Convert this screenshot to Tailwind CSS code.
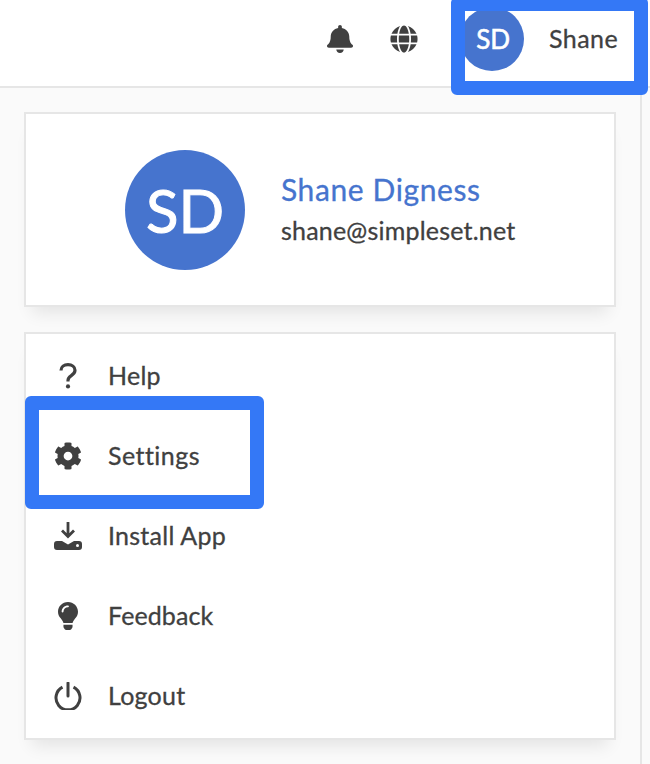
<!DOCTYPE html>
<html lang="en">
<head>
  <meta charset="UTF-8" />
  <meta name="viewport" content="width=device-width, initial-scale=1.0" />
  <title>Account menu</title>
  <script src="https://cdn.jsdelivr.net/npm/@tailwindcss/browser@4"></script>
</head>
<body class="relative h-[764px] overflow-hidden bg-[#fafafa] font-['Lato',sans-serif] text-[#404040] [-webkit-text-stroke:0.3px]">
  <!-- Header -->
  <header class="flex h-[88px] items-start justify-end border-b-2 border-[#e6e6e6] bg-white">
    <svg class="mt-[25px] h-[28px] w-[26px] fill-[#404040]" viewBox="0 0 448 512" preserveAspectRatio="none"><path d="M224 512c35.32 0 63.97-28.65 63.97-64H160.03c0 35.35 28.65 64 63.97 64zm215.39-149.71c-19.32-20.76-55.47-51.99-55.47-154.29 0-77.7-54.48-139.9-127.94-155.16V32c0-17.67-14.32-32-31.98-32s-31.98 14.33-31.98 32v20.84C118.56 68.1 64.08 130.3 64.08 208c0 102.3-36.15 133.53-55.47 154.29-6 6.45-8.66 14.16-8.61 21.71.11 16.4 12.98 32 32.1 32h383.8c19.12 0 32-15.6 32.1-32 .05-7.55-2.61-15.27-8.61-21.71z"/></svg>
    <svg class="mt-[25px] ml-[37px] h-[28px] w-[28px] fill-[#404040]" viewBox="0 0 496 512"><path d="M336.5 160C322 70.7 287.8 8 248 8s-74 62.7-88.5 152h177zM152 256c0 22.2 1.2 43.5 3.3 64h185.3c2.1-20.5 3.3-41.8 3.3-64s-1.2-43.5-3.3-64H155.3c-2.1 20.5-3.3 41.8-3.3 64zm324.7-96c-28.6-67.9-86.5-120.4-158-141.6 24.4 33.8 41.2 84.7 50 141.6h108zM177.2 18.4C105.8 39.6 47.8 92.1 19.3 160h108c8.7-56.9 25.5-107.8 49.9-141.6zM487.4 192H372.7c2.1 21 3.3 42.5 3.3 64s-1.2 43-3.3 64h114.6c5.5-20.5 8.6-41.8 8.6-64s-3.1-43.5-8.5-64zM120 256c0-21.5 1.2-43 3.3-64H8.6C3.2 212.5 0 233.8 0 256s3.2 43.5 8.6 64h114.6c-2-21-3.2-42.5-3.2-64zm39.5 96c14.5 89.3 48.7 152 88.5 152s74-62.7 88.5-152h-177zm159.3 141.6c71.4-21.2 129.4-73.7 158-141.6h-108c-8.8 56.9-25.6 107.8-50 141.6zM19.3 352c28.6 67.9 86.5 120.4 158 141.6-24.4-33.8-41.2-84.7-50-141.6h-108z"/></svg>
    <div class="mt-[7px] ml-[42px] flex h-[64px] w-[64px] items-center justify-center rounded-full bg-[#4674ce] pl-[2px] text-[26px] leading-[60px] text-white [-webkit-text-stroke:0.6px]">SD</div>
    <span class="mt-[22px] ml-[25px] mr-[32px] text-[25px] leading-[32px] tracking-[0.4px]">Shane</span>
  </header>

  <main class="h-[676px] w-[642px] border-r-2 border-[#e6e6e6] pt-[24px] pl-[24px] pr-[24px]">
    <!-- Profile -->
    <section class="flex h-[195px] w-[592px] items-center border-2 border-[#e6e6e6] bg-white pl-[99px] shadow-[0_14px_16px_-8px_rgba(0,0,0,0.09)]">
      <div class="flex h-[120px] w-[120px] shrink-0 items-center justify-center rounded-full bg-[#4674ce] text-[60px] text-white [-webkit-text-stroke:1px]">SD</div>
      <div class="ml-[36px]">
        <h2 class="text-[30px] leading-[40px] tracking-[0.6px] text-[#4674ce]">Shane Digness</h2>
        <p class="mt-[1px] text-[25px] leading-[40px] tracking-[0.2px]">shane@simpleset.net</p>
      </div>
    </section>

    <!-- Menu -->
    <nav class="mt-[25px] flex h-[408px] w-[592px] flex-col border-2 border-[#e6e6e6] bg-white pt-[2px] text-[25px] tracking-[0.25px] shadow-[0_14px_16px_-8px_rgba(0,0,0,0.09)]">
      <a class="flex h-[80px] items-center">
        <span class="flex w-[82px] shrink-0 justify-center pl-[2px]">
          <svg class="h-[26px] w-[18px]" viewBox="0 0 18 26" fill="none" stroke="#404040" stroke-width="3.2"><path d="M2 7.5C2 4 5 1.7 9 1.7s7 2.3 7 5.6c0 3-2 4.3-4 5.6-2 1.3-3 2.4-3 4.6v1"/><circle cx="9" cy="23.4" r="2.1" fill="#404040" stroke="none"/></svg>
        </span>
        Help
      </a>
      <a class="flex h-[80px] items-center">
        <span class="flex w-[82px] shrink-0 justify-center pl-[2px]">
          <svg class="h-[28px] w-[28px] fill-[#404040]" viewBox="0 0 512 512"><path d="M487.4 315.7l-42.6-24.6c4.3-23.2 4.3-47 0-70.2l42.6-24.6c4.9-2.8 7.1-8.6 5.5-14-11.1-35.6-30-67.8-54.7-94.6-3.8-4.1-10-5.1-14.8-2.3L380.8 110c-17.9-15.4-38.5-27.3-60.8-35.1V25.8c0-5.6-3.9-10.5-9.4-11.7-36.7-8.2-74.3-7.8-109.2 0-5.5 1.2-9.4 6.1-9.4 11.7V75c-22.2 7.9-42.8 19.8-60.8 35.1L88.7 85.5c-4.9-2.8-11-1.9-14.8 2.3-24.7 26.7-43.6 58.9-54.7 94.6-1.7 5.4.6 11.2 5.5 14L67.3 221c-4.3 23.2-4.3 47 0 70.2l-42.6 24.6c-4.9 2.8-7.1 8.6-5.5 14 11.1 35.6 30 67.8 54.7 94.6 3.8 4.1 10 5.1 14.8 2.3l42.6-24.6c17.9 15.4 38.5 27.3 60.8 35.1v49.2c0 5.6 3.9 10.5 9.4 11.7 36.7 8.2 74.3 7.8 109.2 0 5.5-1.2 9.4-6.1 9.4-11.7v-49.2c22.2-7.9 42.8-19.8 60.8-35.1l42.6 24.6c4.9 2.8 11 1.9 14.8-2.3 24.7-26.7 43.6-58.9 54.7-94.6 1.5-5.5-.7-11.3-5.6-14.1zM256 336c-44.1 0-80-35.9-80-80s35.9-80 80-80 80 35.9 80 80-35.9 80-80 80z"/></svg>
        </span>
        <span class="tracking-[0.45px]">Settings</span>
      </a>
      <a class="flex h-[80px] items-center">
        <span class="flex w-[82px] shrink-0 justify-center pl-[2px]">
          <svg class="h-[28px] w-[28px]" viewBox="0 0 28 28"><path d="M14 0v14M8 8.5l6 6 6-6" fill="none" stroke="#404040" stroke-width="2.8"/><path d="M3 19h5l6 3.5 6-3.5h5a3 3 0 0 1 3 3v3a3 3 0 0 1-3 3H3a3 3 0 0 1-3-3v-3a3 3 0 0 1 3-3z" fill="#404040"/><circle cx="23.5" cy="23.5" r="1.5" fill="#fff"/></svg>
        </span>
        Install App
      </a>
      <a class="flex h-[80px] items-center">
        <span class="flex w-[82px] shrink-0 justify-center pl-[2px]">
          <svg class="h-[28px] w-[20px] fill-[#404040]" viewBox="0 0 352 512" preserveAspectRatio="none"><path d="M96.06 454.35c.01 6.29 1.87 12.45 5.36 17.69l17.09 25.69a31.99 31.99 0 0 0 26.64 14.28h61.71a31.99 31.99 0 0 0 26.64-14.28l17.09-25.69a31.989 31.989 0 0 0 5.36-17.69l.04-38.35H96.01l.05 38.35zM0 176c0 44.37 16.45 84.85 43.56 115.78 16.52 18.85 42.36 58.23 52.21 91.45.04.26.07.52.11.78h160.24c.04-.26.07-.51.11-.78 9.85-33.22 35.69-72.6 52.21-91.45C335.55 260.85 352 220.37 352 176 352 78.61 272.91-.3 175.45 0 73.44.31 0 82.97 0 176zm176-80c-44.11 0-80 35.89-80 80 0 8.84-7.16 16-16 16s-16-7.16-16-16c0-61.76 50.24-112 112-112 8.84 0 16 7.16 16 16s-7.16 16-16 16z"/></svg>
        </span>
        <span class="tracking-[0.1px]">Feedback</span>
      </a>
      <a class="flex h-[80px] items-center">
        <span class="flex w-[82px] shrink-0 justify-center pl-[2px]">
          <svg class="h-[28px] w-[28px]" viewBox="0 0 28 28" fill="none" stroke="#404040" stroke-width="3"><path d="M8.5 5.2a12 12 0 1 0 11 0"/><path d="M14 1v13" stroke-linecap="round"/></svg>
        </span>
        Logout
      </a>
    </nav>
  </main>

  <!-- Annotation boxes over the screenshot -->
  <div class="absolute top-[-3px] left-[451px] h-[98px] w-[197px] rounded-[6px] border-[14px] border-[#3478f6]"></div>
  <div class="absolute top-[396px] left-[25px] h-[113px] w-[239px] rounded-[6px] border-[14px] border-[#3478f6]"></div>
</body>
</html>
